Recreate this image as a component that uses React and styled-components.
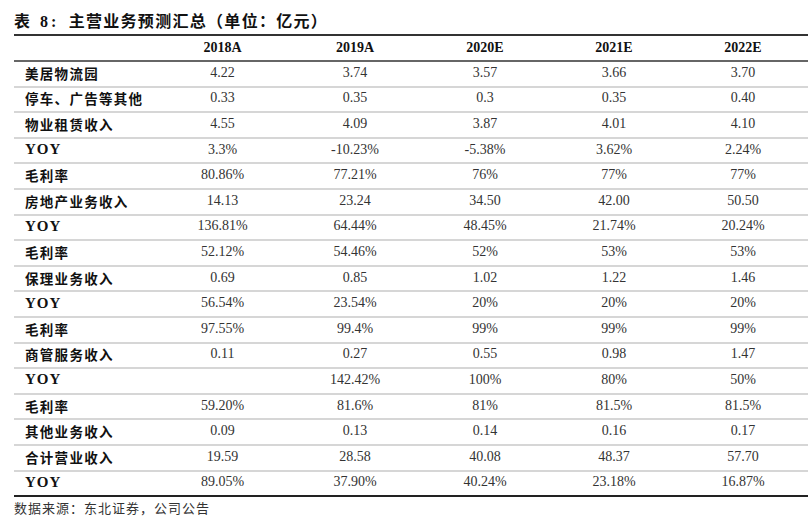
import React from 'react'
import styled, { createGlobalStyle } from 'styled-components'

const GlobalStyle = createGlobalStyle`
  body {
    margin: 0;
    background: #fff;
  }
`;

const years = ['2018A', '2019A', '2020E', '2021E', '2022E'];

const rows = [
  { label: '美居物流园', values: ['4.22', '3.74', '3.57', '3.66', '3.70'] },
  { label: '停车、广告等其他', values: ['0.33', '0.35', '0.3', '0.35', '0.40'] },
  { label: '物业租赁收入', values: ['4.55', '4.09', '3.87', '4.01', '4.10'] },
  { label: 'YOY', latin: true, values: ['3.3%', '-10.23%', '-5.38%', '3.62%', '2.24%'] },
  { label: '毛利率', values: ['80.86%', '77.21%', '76%', '77%', '77%'] },
  { label: '房地产业务收入', values: ['14.13', '23.24', '34.50', '42.00', '50.50'] },
  { label: 'YOY', latin: true, values: ['136.81%', '64.44%', '48.45%', '21.74%', '20.24%'] },
  { label: '毛利率', values: ['52.12%', '54.46%', '52%', '53%', '53%'] },
  { label: '保理业务收入', values: ['0.69', '0.85', '1.02', '1.22', '1.46'] },
  { label: 'YOY', latin: true, values: ['56.54%', '23.54%', '20%', '20%', '20%'] },
  { label: '毛利率', values: ['97.55%', '99.4%', '99%', '99%', '99%'] },
  { label: '商管服务收入', values: ['0.11', '0.27', '0.55', '0.98', '1.47'] },
  { label: 'YOY', latin: true, values: ['', '142.42%', '100%', '80%', '50%'] },
  { label: '毛利率', values: ['59.20%', '81.6%', '81%', '81.5%', '81.5%'] },
  { label: '其他业务收入', values: ['0.09', '0.13', '0.14', '0.16', '0.17'] },
  { label: '合计营业收入', values: ['19.59', '28.58', '40.08', '48.37', '57.70'] },
  { label: 'YOY', latin: true, values: ['89.05%', '37.90%', '40.24%', '23.18%', '16.87%'] },
];

const App = () => {
  return (
    <Page>
      <GlobalStyle />
      <Title>
        <TitleLatin>表 8:</TitleLatin> 主营业务预测汇总（单位：亿元）
      </Title>
      <Table>
        <HeaderRow>
          <LabelCell />
          {years.map((y) => (
            <HeadCell key={y}>{y}</HeadCell>
          ))}
        </HeaderRow>
        {rows.map((r, i) => (
          <Row key={i} $last={i === rows.length - 1}>
            <LabelCell $latin={r.latin}>{r.label}</LabelCell>
            {r.values.map((v, j) => (
              <Cell key={j}>{v}</Cell>
            ))}
          </Row>
        ))}
      </Table>
      <Source>数据来源：东北证券，公司公告</Source>
    </Page>
  );
}

export default App;


const Page = styled.div`
  width: 809px;
  height: 520px;
  padding: 12px 1px 0 14px;
  box-sizing: border-box;
  color: #222;
`;

const Title = styled.div`
  font-family: "Liberation Serif", "Noto Sans CJK SC", serif;
  font-weight: 700;
  font-size: 16px;
  line-height: 20px;
  height: 22px;
  letter-spacing: 1.3px;
  color: #111;
`;

const TitleLatin = styled.span`
  letter-spacing: 3px;
  margin-right: 4px;
`;

const Table = styled.div`
  width: 794px;
  border-top: 2px solid #333;
`;

const HeaderRow = styled.div`
  display: grid;
  grid-template-columns: 141px 135px 130px 130px 128px 130px;
  height: 26px;
  box-sizing: border-box;
  border-bottom: 2px solid #666;
  align-items: center;
`;

const Row = styled.div`
  display: grid;
  grid-template-columns: 141px 135px 130px 130px 128px 130px;
  height: 25.6px;
  box-sizing: border-box;
  border-bottom: 2px solid ${(p) => (p.$last ? '#222' : '#d6d6d6')};
  align-items: center;
  padding-bottom: 2px;
`;

const LabelCell = styled.div`
  padding-left: 11px;
  font-family: ${(p) => (p.$latin ? '"Liberation Serif", serif' : '"Noto Sans CJK SC", sans-serif')};
  font-weight: ${(p) => (p.$latin ? 700 : 600)};
  font-size: ${(p) => (p.$latin ? '15px' : '13.5px')};
  letter-spacing: ${(p) => (p.$latin ? '1px' : '1.3px')};
  color: #111;
  white-space: nowrap;
`;

const HeadCell = styled.div`
  text-align: center;
  font-family: "Liberation Serif", serif;
  font-weight: 700;
  font-size: 14px;
  color: #111;
`;

const Cell = styled.div`
  text-align: center;
  font-family: "Liberation Serif", serif;
  font-size: 14px;
  color: #333;
`;

const Source = styled.div`
  margin-top: 1px;
  font-family: "Noto Sans CJK SC", sans-serif;
  font-size: 13px;
  letter-spacing: 1px;
  color: #333;
`;
